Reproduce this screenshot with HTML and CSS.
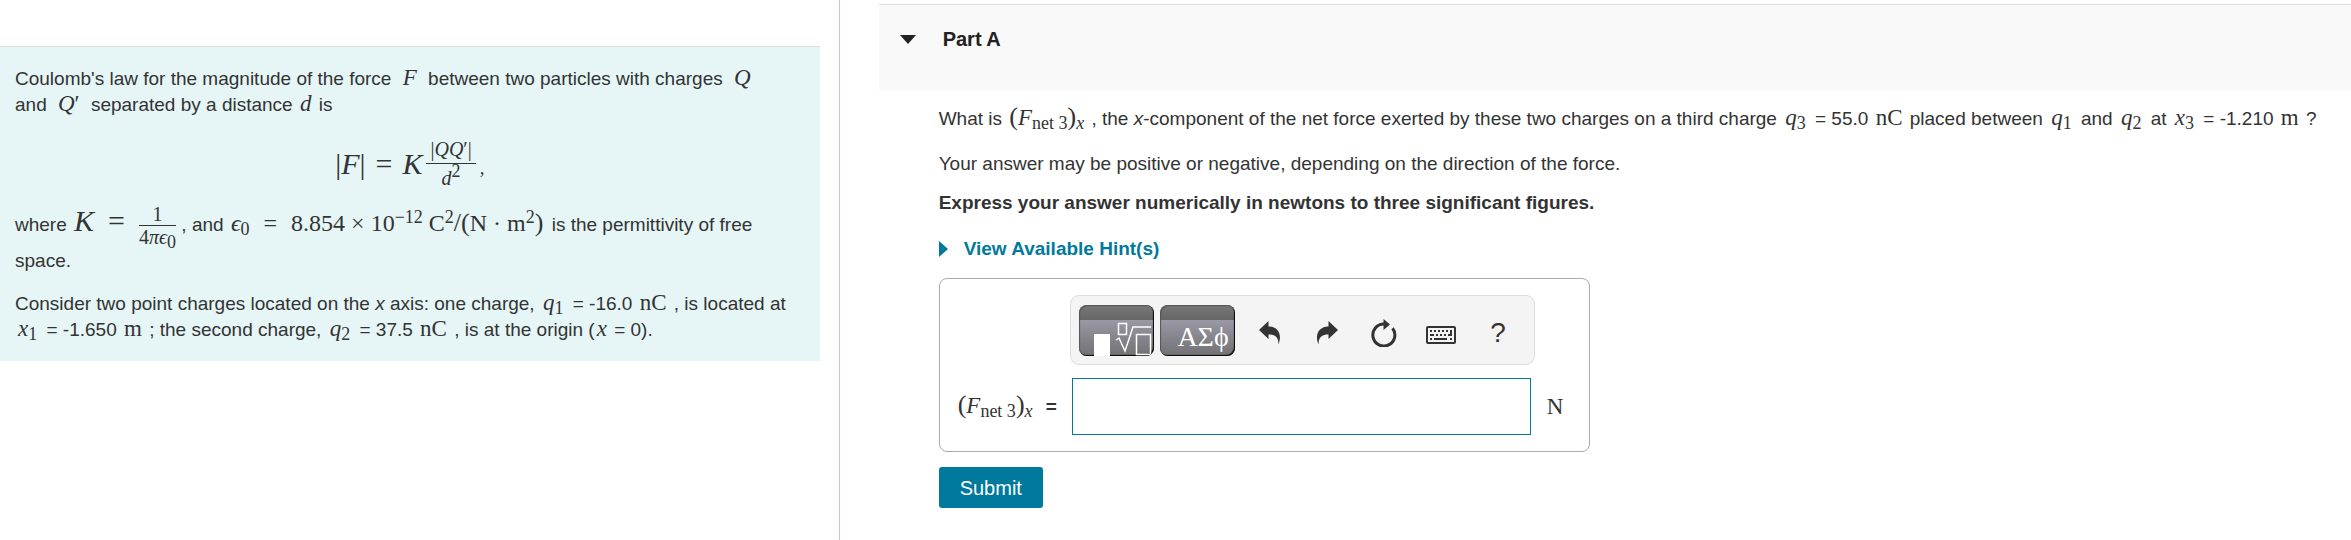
FILE: index.html
```html
<!DOCTYPE html>
<html lang="en">
<head>
<meta charset="utf-8">
<title>Part A</title>
<link rel="stylesheet" href="styles.css">
</head>
<body>
<div class="page">
  <aside class="side">
    <section class="intro">
      <p>Coulomb's law for the magnitude of the force <span class="math wide"><i>F</i></span> between two particles with charges <span class="math wide"><i>Q</i></span> <br>and <span class="math wide"><i>Q</i>′</span> separated by a distance <span class="math"><i>d</i></span> is</p>
      <div class="display">
        <span class="big">|<i>F</i>|</span><span class="big rel">=</span><span class="big"><i>K</i></span>
        <span class="frac"><span class="num">|<i>QQ</i>′|</span><span class="den"><i>d</i><sup>2</sup></span></span><span class="comma">,</span>
      </div>
      <p class="where">where <span class="big"><i>K</i></span><span class="big rel">=</span><span class="frac"><span class="num">1</span><span class="den">4<i>πϵ</i><sub>0</sub></span></span> , and <span class="math"><i>ϵ</i><sub>0</sub><span class="rel">=</span>8.854 × 10<sup>−12</sup> C<sup>2</sup><span class="tall">/(</span>N · m<sup>2</sup><span class="tall">)</span></span> is the permittivity of free <br>space.</p>
      <p>Consider two point charges located on the <i>x</i> axis: one charge, <span class="math var"><i>q</i><sub>1</sub></span> = -16.0 <span class="math">nC</span> , is located at <br><span class="math var"><i>x</i><sub>1</sub></span> = -1.650 <span class="math">m</span> ; the second charge, <span class="math var"><i>q</i><sub>2</sub></span> = 37.5 <span class="math">nC</span> , is at the origin (<span class="math"><i>x</i></span> = 0).</p>
    </section>
  </aside>
  <main class="main">
    <header class="part">
      <svg class="down" viewBox="0 0 16 9"><path d="M0 0h16L8 9z"/></svg>
      <h1>Part A</h1>
    </header>
    <div class="body">
      <p class="question">What is <span class="math"><span class="tall">(</span><i>F</i><sub>net 3</sub><span class="tall">)</span><sub><i>x</i></sub></span> , the <i>x</i>-component of the net force exerted by these two charges on a third charge <span class="math var"><i>q</i><sub>3</sub></span> = 55.0 <span class="math">nC</span> placed between <span class="math var"><i>q</i><sub>1</sub></span> and <span class="math var"><i>q</i><sub>2</sub></span> at <span class="math var"><i>x</i><sub>3</sub></span> = -1.210 <span class="math">m</span> ?</p>
      <p class="note">Your answer may be positive or negative, depending on the direction of the force.</p>
      <p class="express">Express your answer numerically in newtons to three significant figures.</p>
      <a class="hints" href="#hints"><svg viewBox="0 0 9 16"><path d="M0 0l9 8-9 8z"/></svg>View Available Hint(s)</a>
      <form class="answer-form">
        <div class="answer">
          <div class="toolbar">
            <button type="button" class="palette" aria-label="Templates">
              <svg viewBox="0 0 75 51"><path class="solid" d="M15 29h16v22H15z"/><path class="line" d="M39.500 18.500h8v11h-8zM57.500 29.500h14v20h-14zM37 35l3-2 6 13 8-24h18"/></svg>
            </button>
            <button type="button" class="palette greek">ΑΣϕ</button>
            <button type="button" class="tool" aria-label="Undo"><svg viewBox="0 0 26 28"><path d="M2 11L11.500 2v5.500C19 7.500 26 13 21.500 25.500 21.500 18 18 15.500 11.500 15.500V20z"/></svg></button>
            <button type="button" class="tool" aria-label="Redo"><svg viewBox="0 0 26 28"><path d="M24 11L14.500 2v5.500C7 7.500 0 13 4.500 25.500 4.500 18 8 15.500 14.500 15.500V20z"/></svg></button>
            <button type="button" class="tool" aria-label="Reset"><svg viewBox="0 0 26 28"><path class="ring" d="M21.500 9.200A11 11 0 1 1 13 5"/><path d="M12.500 0L19 5.500 12.500 11z"/></svg></button>
            <button type="button" class="tool keys" aria-label="Keyboard shortcuts"><svg viewBox="0 0 30 18"><rect class="frame" x="1" y="1" width="28" height="16" rx="1"/><path class="dots" d="M4 5h2m2 0h2m2 0h2m2 0h2m2 0h2M4 9h4m2 0h2m2 0h2m2 0h2m2 0h4M25 4v6M4 13h2m2 0h13m3 0h2"/></svg></button>
            <button type="button" class="tool help">?</button>
          </div>
          <label for="value"><span class="math"><span class="tall">(</span><i>F</i><sub>net 3</sub><span class="tall">)</span><sub><i>x</i></sub></span> <b>=</b></label>
          <input id="value" type="text">
          <span class="math unit">N</span>
        </div>
        <button type="submit" class="submit">Submit</button>
      </form>
    </div>
  </main>
</div>
</body>
</html>
```
FILE: styles.css
```css
* { box-sizing: border-box; }
body {
  margin: 0;
  background: #fff;
  color: #333;
  font: 19px/26px "Liberation Sans", Arial, sans-serif;
}
p, h1 { margin: 0; }
.page {
  display: grid;
  grid-template-columns: 5fr 9fr;
  min-height: 100vh;
}
.side {
  padding: 46px 19px 0 0;
  border-right: 1px solid #c1c9d4;
}
.intro {
  padding: 19px 15px 18px;
  border-top: 1px solid #ddd;
  background: #e6f6f7;
}
.math, .big, .frac, .comma { font-family: "Liberation Serif", "Times New Roman", serif; }
.math { margin: 0 2px; font-size: 23px; line-height: 0; white-space: nowrap; }
.wide { margin: 0 6px; }
.var { margin: 0 4px 0 3px; }
.big { font-size: 30px; line-height: 0; }
.rel { margin: 0 12px; }
.tall { font-size: 26px; }
sub, sup { font-size: 18px; line-height: 0; }
sub { vertical-align: -4px; }
sup { vertical-align: 8px; }
.frac {
  display: inline-flex;
  flex-direction: column;
  text-align: center;
  font-size: 20px;
  line-height: 22px;
  vertical-align: middle;
}
.num { border-bottom: 1px solid #333; padding: 0 4px; }
.display {
  display: flex;
  align-items: center;
  justify-content: center;
  margin: 17px 0 11px;
}
.display .rel { margin: 0 10px; }
.display .frac { margin-left: 4px; line-height: 28px; }
.comma { margin: 8px 0 0 4px; }
.where { margin-bottom: 17px; }
.where .big { margin-left: 2px; }
.where .rel { margin: 0 14px; }
.where .math { margin-right: 3px; font-size: 24px; }
.main { padding: 4px 0 0 39px; min-width: 0; }
.part {
  display: flex;
  align-items: flex-start;
  gap: 27px;
  height: 86px;
  padding: 21px;
  border-top: 1px solid #ddd;
  background: #f9f9f9;
}
.down { width: 16px; height: 9px; margin-top: 9px; fill: #222; }
h1 { font-size: 20px; line-height: 26px; color: #222; }
.body { padding: 16px 0 0 60px; }
.note { margin-top: 19px; }
.express { margin-top: 13px; font-weight: bold; }
.hints {
  display: inline-flex;
  align-items: center;
  gap: 16px;
  margin-top: 20px;
  color: #007a9c;
  font-weight: bold;
  text-decoration: none;
}
.hints svg { width: 9px; height: 16px; fill: #007a9c; }
.answer {
  display: grid;
  grid-template-columns: 114px 465px 1fr;
  row-gap: 13px;
  align-items: center;
  max-width: 651px;
  margin-top: 14px;
  padding: 16px;
  border: 1px solid #aaa;
  border-radius: 8px;
}
.toolbar {
  grid-column: 2;
  display: flex;
  align-items: center;
  height: 70px;
  padding: 0 8px;
  border: 1px solid #ddd;
  border-radius: 9px;
  background: #f4f4f4;
}
button { margin: 0; padding: 0; border: 0; background: none; color: #333; font: inherit; }
.palette {
  width: 75px;
  height: 51px;
  margin-right: 6px;
  overflow: hidden;
  border-radius: 8px;
  background: linear-gradient(#777, #666 15px, #9a98a4 15px, #717174);
  box-shadow: inset -1px -1px 1px #000, inset 1px 1px 1px #555;
}
.palette svg { display: block; width: 75px; height: 51px; }
.solid { fill: #fff; }
.line { fill: none; stroke: #fff; stroke-width: 1.500; }
.greek {
  padding: 14px 6px 0 0;
  color: #fff;
  font: 28px/32px "Liberation Serif", serif;
  text-align: right;
}
.tool { display: grid; place-items: center; width: 57px; height: 50px; padding: 5px 0 0 2px; }
.tool svg { width: 26px; height: 28px; fill: #333; }
.tool .ring { fill: none; stroke: #333; stroke-width: 3; }
.tool.keys svg { width: 30px; height: 18px; margin-top: 5px; }
.tool.keys .frame { fill: none; stroke: #333; stroke-width: 2; }
.keys .dots { stroke: #333; stroke-width: 2; fill: none; }
.help { font-size: 28px; }
label { grid-column: 1; white-space: nowrap; }
label b { margin-left: 6px; }
input {
  width: 459px;
  height: 57px;
  margin-left: 2px;
  padding: 0 10px;
  border: 1px solid #007a9c;
  background: #fff;
  font: inherit;
}
.unit { padding-left: 10px; }
.submit {
  margin-top: 15px;
  padding: 8px 21px 7px;
  border-radius: 3px;
  background: #007a9c;
  color: #fff;
  font-size: 20px;
}
```
